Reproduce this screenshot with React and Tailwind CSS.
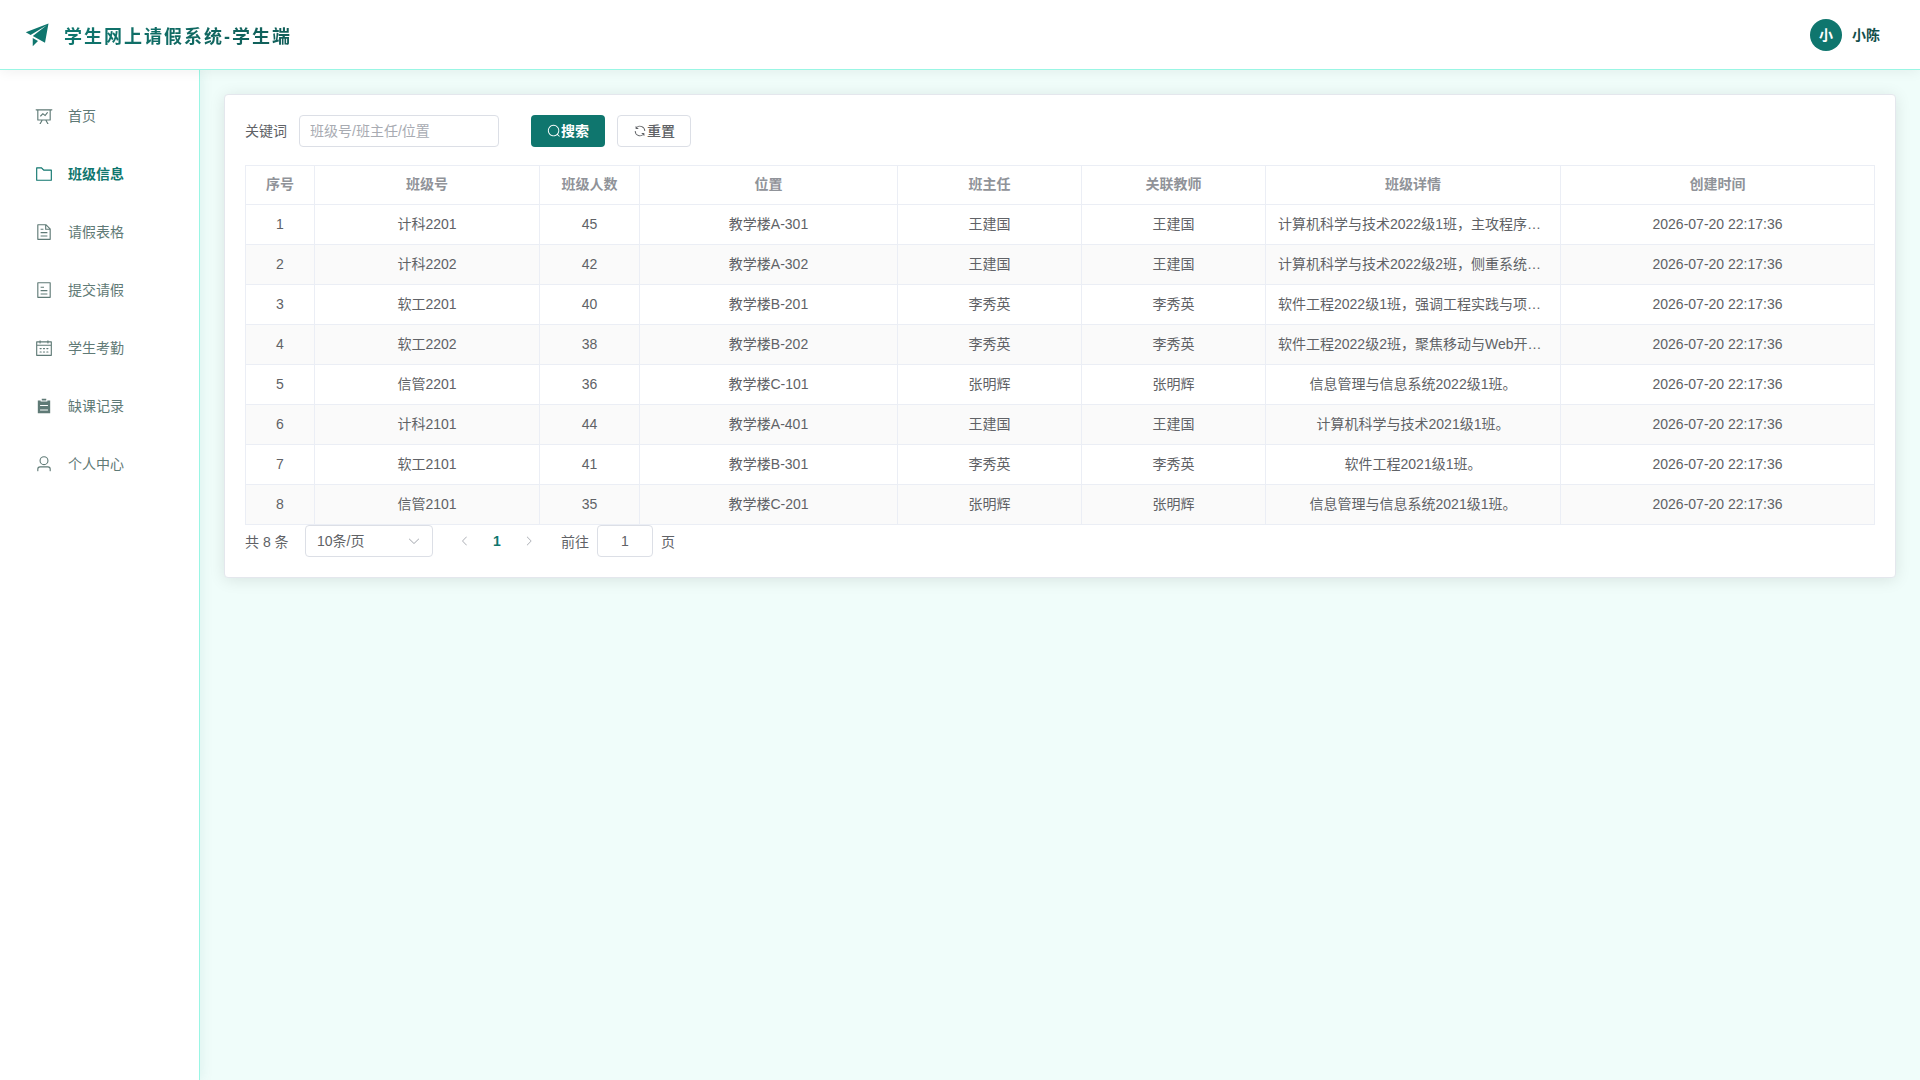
import { useState } from "react";
import clsx from "clsx";

// icon paths share a 1024 x 1024 view box
const ICONS = {
  promotion: "m64 448 832-320-128 704-446.08-243.328L832 192 242.816 545.472zm256 512V657.024L512 768z",
  dataLine:
    "M359.168 768H160a32 32 0 0 1-32-32V192H64a32 32 0 0 1 0-64h896a32 32 0 1 1 0 64h-64v544a32 32 0 0 1-32 32H665.216l110.848 192h-73.856L591.36 768H433.024L322.176 960H248.32zM832 192H192v512h640zM342.656 534.656a32 32 0 1 1-45.312-45.312L444.992 341.76l125.44 94.08L679.04 300.032a32 32 0 1 1 49.92 39.936L581.632 524.224 451.008 426.24 342.656 534.592z",
  folder:
    "M128 192v640h768V320H485.76L357.504 192zm-32-64h287.872l128.384 128H928a32 32 0 0 1 32 32v576a32 32 0 0 1-32 32H96a32 32 0 0 1-32-32V160a32 32 0 0 1 32-32",
  document:
    "M832 384H576V128H192v768h640zm-26.496-64L640 154.496V320zM160 64h480l256 256v608a32 32 0 0 1-32 32H160a32 32 0 0 1-32-32V96a32 32 0 0 1 32-32m160 448h384v64H320zm0-192h160v64H320zm0 384h384v64H320z",
  tickets:
    "M192 128v768h640V128zm-32-64h704a32 32 0 0 1 32 32v832a32 32 0 0 1-32 32H160a32 32 0 0 1-32-32V96a32 32 0 0 1 32-32m160 448h384v64H320zm0-192h192v64H320zm0 384h384v64H320z",
  calendar:
    "M128 384v512h768V192H768v32a32 32 0 1 1-64 0v-32H320v32a32 32 0 0 1-64 0v-32H128v128h768v64zm192-256h384V96a32 32 0 1 1 64 0v32h160a32 32 0 0 1 32 32v768a32 32 0 0 1-32 32H96a32 32 0 0 1-32-32V160a32 32 0 0 1 32-32h160V96a32 32 0 0 1 64 0zm-32 384h64a32 32 0 0 1 0 64h-64a32 32 0 0 1 0-64m0 192h64a32 32 0 1 1 0 64h-64a32 32 0 1 1 0-64m192-192h64a32 32 0 0 1 0 64h-64a32 32 0 0 1 0-64m0 192h64a32 32 0 1 1 0 64h-64a32 32 0 1 1 0-64m192-192h64a32 32 0 1 1 0 64h-64a32 32 0 1 1 0-64m0 192h64a32 32 0 1 1 0 64h-64a32 32 0 1 1 0-64",
  list: "M704 192h160v736H160V192h160v64h384zM288 512h448v-64H288zm0 256h448v-64H288zm96-576V96h256v96z",
  user: "M512 512a192 192 0 1 0 0-384 192 192 0 0 0 0 384m0 64a256 256 0 1 1 0-512 256 256 0 0 1 0 512m320 320v-96a96 96 0 0 0-96-96H288a96 96 0 0 0-96 96v96a32 32 0 1 1-64 0v-96a160 160 0 0 1 160-160h448a160 160 0 0 1 160 160v96a32 32 0 1 1-64 0",
  search:
    "m795.904 750.72 124.992 124.928a32 32 0 0 1-45.248 45.248L750.656 795.904a416 416 0 1 1 45.248-45.248zM480 832a352 352 0 1 0 0-704 352 352 0 0 0 0 704",
  refresh:
    "M771.776 794.88A384 384 0 0 1 128 512h64a320 320 0 0 0 555.712 216.448H654.72a32 32 0 1 1 0-64h149.056a32 32 0 0 1 32 32v148.928a32 32 0 1 1-64 0v-50.56zM276.288 295.616h92.992a32 32 0 0 1 0 64H220.16a32 32 0 0 1-32-32V178.56a32 32 0 0 1 64 0v50.56A384 384 0 0 1 896.128 512h-64a320 320 0 0 0-555.776-216.384z",
  arrowDown:
    "M831.872 340.864 512 652.672 192.128 340.864a30.592 30.592 0 0 0-42.752 0 29.12 29.12 0 0 0 0 41.6L489.664 714.24a32 32 0 0 0 44.672 0l340.288-331.712a29.12 29.12 0 0 0 0-41.728 30.592 30.592 0 0 0-42.752 0z",
  arrowLeft:
    "M609.408 149.376 277.76 489.6a32 32 0 0 0 0 44.672l331.648 340.352a29.12 29.12 0 0 0 41.728 0 30.592 30.592 0 0 0 0-42.752L339.264 511.936l311.872-319.872a30.592 30.592 0 0 0 0-42.688 29.12 29.12 0 0 0-41.728 0",
  arrowRight:
    "M340.864 149.312a30.592 30.592 0 0 0 0 42.752L652.736 512 340.864 831.872a30.592 30.592 0 0 0 0 42.752 29.12 29.12 0 0 0 41.728 0L714.24 534.336a32 32 0 0 0 0-44.672L382.592 149.376a29.12 29.12 0 0 0-41.728 0z",
};

const MENU = [
  { icon: "dataLine", label: "首页" },
  { icon: "folder", label: "班级信息" },
  { icon: "document", label: "请假表格" },
  { icon: "tickets", label: "提交请假" },
  { icon: "calendar", label: "学生考勤" },
  { icon: "list", label: "缺课记录" },
  { icon: "user", label: "个人中心" },
];

const COLUMNS = [
  { label: "序号", width: "w-[69px]" },
  { label: "班级号", width: "w-[225px]" },
  { label: "班级人数", width: "w-[100px]" },
  { label: "位置", width: "w-[258px]" },
  { label: "班主任", width: "w-[184px]" },
  { label: "关联教师", width: "w-[184px]" },
  { label: "班级详情", width: "w-[295px]" },
  { label: "创建时间", width: "w-[314px]" },
];

const CREATED_AT = "2026-07-20 22:17:36";

const ROWS = [
  ["计科2201", "45", "教学楼A-301", "王建国", "计算机科学与技术2022级1班，主攻程序…"],
  ["计科2202", "42", "教学楼A-302", "王建国", "计算机科学与技术2022级2班，侧重系统…"],
  ["软工2201", "40", "教学楼B-201", "李秀英", "软件工程2022级1班，强调工程实践与项…"],
  ["软工2202", "38", "教学楼B-202", "李秀英", "软件工程2022级2班，聚焦移动与Web开…"],
  ["信管2201", "36", "教学楼C-101", "张明辉", "信息管理与信息系统2022级1班。"],
  ["计科2101", "44", "教学楼A-401", "王建国", "计算机科学与技术2021级1班。"],
  ["软工2101", "41", "教学楼B-301", "李秀英", "软件工程2021级1班。"],
  ["信管2101", "35", "教学楼C-201", "张明辉", "信息管理与信息系统2021级1班。"],
];

function Icon({ name, className }) {
  return (
    <svg viewBox="0 0 1024 1024" fill="currentColor" className={clsx("shrink-0", className)}>
      <path d={ICONS[name]} />
    </svg>
  );
}

function Header() {
  return (
    <header className="relative z-20 flex h-[70px] shrink-0 items-center justify-between border-b border-[#99f6e4] bg-white pl-6 pr-10 shadow-[0_2px_12px_rgba(0,0,0,0.06)]">
      <div className="flex items-center gap-3">
        <Icon name="promotion" className="size-7 text-[#0f766e]" />
        <h1 className="bg-linear-to-r from-[#0f766e] to-[#115e59] bg-clip-text pt-[7px] text-[18px] font-bold tracking-[2px] text-transparent">
          学生网上请假系统-学生端
        </h1>
      </div>
      <div className="flex items-center gap-2.5 text-sm font-bold">
        <span className="flex size-8 items-center justify-center rounded-full bg-[#0f766e] text-white">小</span>
        <span className="text-[#134e4a]">小陈</span>
      </div>
    </header>
  );
}

function Sidebar({ active, onSelect }) {
  return (
    <aside className="relative z-10 w-[200px] shrink-0 border-r border-[#99f6e4] bg-white pt-[21px] shadow-[2px_0_12px_rgba(15,118,110,0.08)]">
      <nav className="flex flex-col gap-2">
        {MENU.map((item) => (
          <button
            key={item.label}
            onClick={() => onSelect(item.label)}
            className={clsx(
              "flex h-[50px] cursor-pointer items-center gap-3 pl-8 text-sm",
              active === item.label ? "font-bold text-[#0f766e]" : "text-[#5f7a76]"
            )}
          >
            <span className="flex w-6 justify-center">
              <Icon name={item.icon} className="size-[18px]" />
            </span>
            {item.label}
          </button>
        ))}
      </nav>
    </aside>
  );
}

function SearchForm() {
  const [keyword, setKeyword] = useState("");

  return (
    <form className="flex items-center" onSubmit={(e) => e.preventDefault()}>
      <label htmlFor="keyword" className="mr-3">
        关键词
      </label>
      <input
        id="keyword"
        value={keyword}
        onChange={(e) => setKeyword(e.target.value)}
        placeholder="班级号/班主任/位置"
        className="mr-8 h-8 w-[200px] rounded border border-[#dcdfe6] px-2.5 outline-none placeholder:text-[#a8abb2] focus:border-[#0f766e]"
      />
      <button
        type="submit"
        className="mr-3 flex h-8 w-[74px] cursor-pointer items-center justify-center rounded bg-[#0f766e] font-bold text-white"
      >
        <Icon name="search" className="size-3.5" />
        搜索
      </button>
      <button
        type="button"
        onClick={() => setKeyword("")}
        className="flex h-8 w-[74px] cursor-pointer items-center justify-center rounded border border-[#dcdfe6] font-medium"
      >
        <Icon name="refresh" className="size-3.5" />
        重置
      </button>
    </form>
  );
}

function ClassTable() {
  return (
    <table className="mt-[18px] w-full table-fixed border-separate border-spacing-0 border-l border-[#ebeef5] text-center leading-[23px]">
      <thead>
        <tr>
          {COLUMNS.map((col) => (
            <th
              key={col.label}
              className={clsx(
                "h-10 border-t border-r border-b border-[#ebeef5] p-0 pb-0.5 font-bold text-[#909399]",
                col.width
              )}
            >
              {col.label}
            </th>
          ))}
        </tr>
      </thead>
      <tbody>
        {ROWS.map(([name, count, place, teacher, detail], i) => (
          <tr key={name} className="even:bg-[#fafafa]">
            {[i + 1, name, count, place, teacher, teacher, detail, CREATED_AT].map((cell, j) => (
              <td
                key={j}
                className={clsx(
                  "h-10 border-r border-b border-[#ebeef5] px-3 py-0 whitespace-nowrap",
                  String(cell).endsWith("…") && "text-left"
                )}
              >
                {cell}
              </td>
            ))}
          </tr>
        ))}
      </tbody>
    </table>
  );
}

function Pagination() {
  return (
    <div className="flex h-8 items-center">
      <span className="mr-4 w-11 pt-0.5 whitespace-nowrap">共 8 条</span>
      <button className="mr-4 flex h-8 w-32 items-center justify-between rounded border border-[#dcdfe6] px-[11px]">
        10条/页
        <Icon name="arrowDown" className="size-3.5 text-[#a8abb2]" />
      </button>
      <button className="flex size-8 items-center justify-center text-[#a8abb2]">
        <Icon name="arrowLeft" className="size-3" />
      </button>
      <button className="flex size-8 items-center justify-center font-bold text-[#0f766e]">1</button>
      <button className="mr-4 flex size-8 items-center justify-center text-[#a8abb2]">
        <Icon name="arrowRight" className="size-3" />
      </button>
      <span className="pt-0.5">前往</span>
      <input
        defaultValue="1"
        className="mx-2 h-8 w-14 rounded border border-[#dcdfe6] text-center outline-none focus:border-[#0f766e]"
      />
      <span className="pt-0.5">页</span>
    </div>
  );
}

function App() {
  const [active, setActive] = useState("班级信息");

  return (
    <div className="flex h-screen flex-col overflow-hidden bg-[#f0fdfa] font-['Liberation_Sans','Noto_Sans_CJK_SC',sans-serif] text-sm text-[#606266]">
      <Header />
      <div className="flex min-h-0 flex-1">
        <Sidebar active={active} onSelect={setActive} />
        <main className="min-w-0 flex-1 p-6">
          <section className="rounded border border-[#e4e7ed] bg-white p-5 shadow-[0_2px_16px_rgba(0,0,0,0.1)]">
            <SearchForm />
            <ClassTable />
            <Pagination />
          </section>
        </main>
      </div>
    </div>
  );
}

export default App;
